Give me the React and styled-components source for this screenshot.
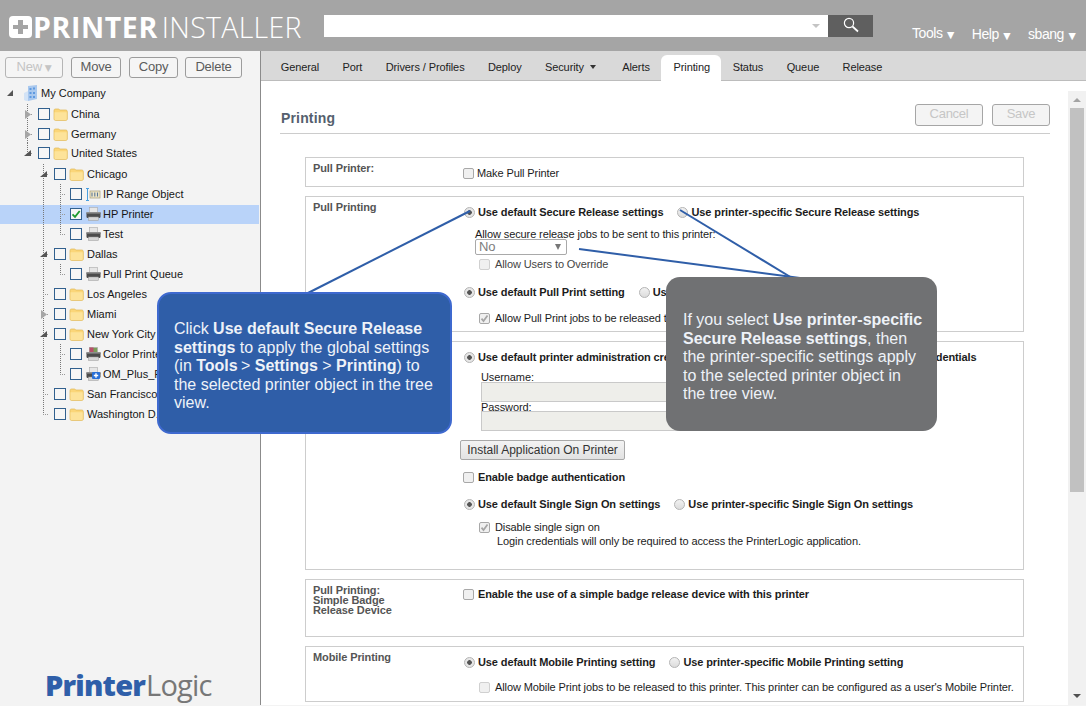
import React from "react";
import styled, { createGlobalStyle } from "styled-components";

const Global = createGlobalStyle`
  html, body { margin: 0; padding: 0; height: 100%; overflow: hidden; background: #f3f3f3; }
  body { font-family: "Liberation Sans", Arial, sans-serif; font-size: 11px; color: #1c1c1c; }
  * { box-sizing: border-box; }
`;

const Page = styled.div`position: relative; width: 1086px; height: 706px; display: flex; flex-direction: column; overflow: hidden; background: #f3f3f3;`;
const Header = styled.header`height: 51px; background: #a5a5a5; display: flex; flex: none;`;
const Brand = styled.div`width: 324px; padding: 16px 0 0 9px; display: flex; align-items: center; height: 37px; color: #fff; font-family: "Open Sans", sans-serif; font-size: 28.5px; line-height: 22px;`;
const BrandBold = styled.span`font-weight: 700; margin-left: 1px; letter-spacing: 0.6px;`;
const BrandLight = styled.span`font-weight: 300; margin-left: 4px; letter-spacing: 0.3px;`;
const SearchWrap = styled.div`width: 504px; height: 22px; margin-top: 15px; background: #fff; display: flex; align-items: center; justify-content: flex-end; padding-right: 8px;`;
const SearchCaret = styled.span`width: 0; height: 0; border: 4px solid transparent; border-top: 4px solid #c4c4c4; border-bottom: 0;`;
const SearchButton = styled.div`width: 45px; height: 22px; margin-top: 15px; background: #5f5f5f; display: flex; align-items: center; justify-content: center; padding-bottom: 2px;`;
const Nav = styled.nav`display: flex; margin-left: 39px; gap: 18px; padding-top: 25px; color: #fff; font-size: 14px; line-height: 16px; letter-spacing: -0.45px;`;
const NavItem = styled.span`margin-top: ${p => p.$dy || 0}px;`;
const Arrow = styled.span`font-family: "DejaVu Sans", sans-serif; font-size: 9.5px; margin-left: 1px;`;

const Body = styled.div`flex: 1; display: flex; min-height: 0; margin-bottom: 1px;`;
const Sidebar = styled.aside`width: 261px; flex: none; background: #f3f3f3; border-right: 1px solid #8b8b8b; display: flex; flex-direction: column;`;
const ToolBar = styled.div`display: flex; padding: 6px 0 0 5px; height: 32px;`;
const ToolButton = styled.div`
  height: 21px; width: ${p => p.$w}px; margin-right: ${p => p.$mr}px; border: 1px solid #9c9c9c; border-radius: 3px; background: #f5f5f5;
  font-size: 13px; letter-spacing: -0.25px; line-height: 17px; text-align: center; color: ${p => p.$off ? "#c4c4c4" : "#5b5b5b"};
  ${p => p.$off && "border-color:#b5b5b5;"}
`;
const SmallArrow = styled.span`font-family: "DejaVu Sans", sans-serif; font-size: 9px; margin-left: 3px;`;
const Tree = styled.div`display: flex; flex-direction: column;`;
const TreeRow = styled.div`
  height: 20px; display: flex; align-items: center; flex: none; margin-top: ${p => p.$mt || 0}px; font-size: 11px;
  ${p => p.$sel && "background: linear-gradient(transparent 1px, #b9d3f9 1px); width: 259px;"}
`;
const Gutter = styled.svg`flex: none; display: block;`;
const Check = styled.span`
  width: 12px; height: 12px; border: 1px solid #31608e; background: #f6f6f6; flex: none; margin-right: ${p => p.$mr}px; display: flex; align-items: center; justify-content: center;
`;
const TreeIcon = styled.svg`flex: none; display: block; margin-right: ${p => p.$mr ?? 3}px;`;
const TreeLabel = styled.span`white-space: nowrap; color: #161616;`;
const Logo = styled.div`margin-top: auto; padding: 0 0 0 45px; height: 35px; font-family: "Open Sans", sans-serif; font-size: 29px; line-height: 30px; letter-spacing: -0.8px; white-space: nowrap;`;
const LogoBold = styled.span`font-weight: 800; color: #2f5fa9;`;
const LogoLight = styled.span`font-weight: 400; color: #777; margin-left: 1px;`;

const Main = styled.main`flex: 1; display: flex; flex-direction: column; min-width: 0;`;
const Tabs = styled.div`height: 30px; flex: none; background: #d9d9d9; border-bottom: 1px solid #bcbcbc; display: flex; align-items: flex-end; padding-left: 8px; letter-spacing: -0.1px;`;
const Tab = styled.div`
  height: ${p => p.$on ? 26 : 25}px; line-height: 25px; padding: ${p => p.$on ? "0 11px 0 12px" : "0 11.7px"}; white-space: nowrap; color: #222; font-size: 11px;
  margin-bottom: ${p => p.$on ? -1 : 0}px; margin-right: ${p => p.$mr || 0}px;
  ${p => p.$on && "background:#fff; border-radius: 6px 6px 0 0;"}
`;
const TabCaret = styled.span`display: inline-block; width: 0; height: 0; border: 3.5px solid transparent; border-top: 4px solid #333; border-bottom: 0; margin-left: 6px; vertical-align: 2px;`;
const Work = styled.div`flex: 1; display: flex; min-height: 0; background: #fff;`;
const Content = styled.div`width: 807px; flex: none; padding: 23px 0 0 19px;`;
const TitleBar = styled.div`width: 770px; height: 30px; border-bottom: 1px solid #ccc; display: flex; align-items: flex-start; justify-content: space-between;`;
const Title = styled.h2`margin: 6px 0 0 1px; font-size: 14px; line-height: 16px; font-weight: 700; color: #555f6e; letter-spacing: 0.15px;`;
const TitleActions = styled.div`display: flex; gap: 9px;`;
const GhostButton = styled.div`height: 22px; width: ${p => p.$w}px; border: 1px solid #a6a6a6; border-radius: 3px; background: #f4f4f4; color: #c6c6c6; font-size: 13px; letter-spacing: -0.25px; line-height: 17px; text-align: center;`;
const Boxes = styled.div`display: flex; flex-direction: column; gap: 9px; margin: 23px 0 0 25px; width: 719px; letter-spacing: -0.1px;`;
const Box = styled.section`height: ${p => p.$h}px; border: 1px solid #cdcdcd; display: grid; grid-template-columns: 150px 1fr; padding-left: 7px; overflow: hidden;`;
const BoxLabel = styled.div`font-weight: 700; color: #555; font-size: 11px; line-height: ${p => p.$lh || 14}px; padding-top: ${p => p.$pt || 3}px; white-space: pre-line;`;
const BoxBody = styled.div`padding-top: ${p => p.$pt || 8}px; min-width: 0; display: flex; flex-direction: column; align-items: flex-start;`;
const Line = styled.div`
  height: 14px; line-height: 14px; display: flex; align-items: center; flex: none; white-space: nowrap;
  margin-top: ${p => p.$mt || 0}px; margin-left: ${p => p.$ml || 0}px; font-weight: ${p => p.$b ? 700 : 400};
`;
const DimText = styled.span`color: #444;`;
const Plain = styled.div`height: 14px; line-height: 14px; white-space: nowrap; flex: none; margin-top: ${p => p.$mt || 0}px; margin-left: ${p => p.$ml || 0}px;`;
const Radio = styled.span`
  width: 11px; height: 11px; border-radius: 50%; flex: none; border: 1px solid #b4b4b4; margin-left: ${p => p.$ml ?? 1}px; margin-right: ${p => p.$mr ?? 3}px;
  background: ${p => p.$on ? "radial-gradient(circle, #555 0 2px, #e6e6e6 2.6px)" : "linear-gradient(#f2f2f2,#dcdcdc)"};
`;
const Tick = styled.span`
  width: 11px; height: 11px; border-radius: 2px; flex: none; border: 1px solid ${p => p.$off ? "#d0d0d0" : "#a8a8a8"}; background: #f0f0f0;
  margin-right: ${p => p.$mr ?? 4}px; display: flex; align-items: center; justify-content: center;
`;
const SelectBox = styled.div`width: 92px; height: 16px; margin: -2px 0 0 12px; border: 1px solid #a9a9a9; border-radius: 2px; font-size: 13px; line-height: 14px; color: #7d7d7d; padding: 0 5px 0 3px; display: flex; justify-content: space-between; align-items: center;`;
const SelectCaret = styled.span`width: 0; height: 0; border: 3.5px solid transparent; border-top: 6px solid #777; border-bottom: 0;`;
const Field = styled.div`width: 290px; height: 20px; border: 1px solid #c9c9c9; background: #eeeeea; flex: none; margin: ${p => p.$mt}px 0 0 18px;`;
const InstallButton = styled.div`width: 165px; height: 20px; margin: 9px 0 0 -3px; flex: none; border: 1px solid #a8a8a8; border-radius: 2px; background: linear-gradient(#f3f3f3,#e2e2e2); font-size: 12px; letter-spacing: 0; line-height: 18px; text-align: center; color: #333;`;
const Scrollbar = styled.div`width: 18px; margin-top: 10px; background: #f1f1f1; flex: none; display: flex; flex-direction: column; align-items: center;`;
const ScrollUp = styled.span`width: 0; height: 0; margin-top: 7px; border: 4px solid transparent; border-bottom: 4px solid #a3a3a3; border-top: 0;`;
const Thumb = styled.div`width: 14px; height: 384px; margin-top: 6px; background: #c1c1c1;`;
const ScrollDown = styled.span`width: 0; height: 0; margin-top: auto; margin-bottom: 7px; border: 4px solid transparent; border-top: 4px solid #505050; border-bottom: 0;`;

const Lines = styled.svg`position: absolute; left: 0; top: 0; pointer-events: none;`;
const Callout = styled.div`
  position: absolute; left: ${p => p.$l}px; top: ${p => p.$t}px; width: ${p => p.$w}px; height: ${p => p.$h}px;
  border-radius: 14px; font-size: 16px; line-height: 18.5px; color: #eef2f8; padding: ${p => p.$pt}px ${p => p.$pr}px 0 ${p => p.$pl}px;
  background: ${p => p.$blue ? "#2f5ea8" : "#707173"}; ${p => p.$blue && "border: 2px solid #3e69cf;"}
`;

const Folder = () => (
  <TreeIcon width="15" height="13" viewBox="0 0 15 13">
    <path d="M1 2.5C1 1.5 1.6 1 2.4 1h3c.6 0 1 .3 1.3 1h6c1 0 1.6.6 1.6 1.6V11c0 .9-.6 1.4-1.4 1.4H2.4C1.6 12.4 1 11.9 1 11z" fill="#fbd679" stroke="#e0b758" strokeWidth=".7" />
    <path d="M1.5 4.2h12.2V11c0 .6-.4 1-1 1H2.5c-.6 0-1-.4-1-1z" fill="#fde39a" />
  </TreeIcon>
);
const PrinterIcon = ({ kind }) => (
  <TreeIcon $mr={2} width="15" height="14" viewBox="0 0 15 14">
    <rect x="3.5" y="0.5" width="8" height="5" fill={kind === "color" ? "#7a9e58" : "#e6e6e6"} stroke="#aaa" strokeWidth=".6" />
    {kind === "color" && <rect x="3.5" y="0.5" width="4" height="5" fill="#b84e6a" />}
    <rect x="0.5" y="5" width="14" height="6" rx="1.3" fill="#4c4c4c" />
    <rect x="0.5" y="5" width="14" height="1.6" fill="#8e8e8e" />
    <rect x="2.5" y="10" width="10" height="3.5" fill="#d6d6d6" stroke="#999" strokeWidth=".5" />
    {kind === "plus" && <><rect x="6" y="5" width="8" height="7" rx="1" fill="#2a71d8" /><path d="M10 6.3v4.4M7.8 8.5h4.4" stroke="#fff" strokeWidth="1.4" /></>}
  </TreeIcon>
);
const RangeIcon = () => (
  <TreeIcon $mr={2} width="15" height="13" viewBox="0 0 15 13">
    <path d="M1.5 0.5v12M0 .5h3M0 12.5h3" stroke="#4aa0e0" strokeWidth="1" fill="none" />
    <rect x="4" y="3" width="10" height="7" fill="#efe6c8" stroke="#a49a76" strokeWidth=".7" />
    <path d="M6 4.5v4M8.8 4.5v4M11.5 4.5v4" stroke="#5b7797" strokeWidth="1.1" />
  </TreeIcon>
);
const CompanyIcon = () => (
  <TreeIcon width="15" height="17" viewBox="0 0 15 17">
    <path d="M5 1l9-1v14l-9 2z" fill="#a9c8ee" />
    <path d="M1 8l4-2v10H3l-2-1z" fill="#d3e3f6" />
    <path d="M6.5 3h2v2h-2zM10 2.6h2v2h-2zM6.5 7h2v2h-2zM10 7h2v2h-2zM6.5 11h2v2h-2zM10 11h2v2h-2z" fill="#5f9ae0" />
  </TreeIcon>
);
const Green = () => (
  <svg width="10" height="10" viewBox="0 0 10 10"><path d="M1.5 5.3L4 7.8 8.7 2" fill="none" stroke="#1d9b2f" strokeWidth="1.8" /></svg>
);
const Grey = () => (
  <svg width="9" height="9" viewBox="0 0 9 9"><path d="M1.5 4.6L3.5 7 7.5 1.5" fill="none" stroke="#a5a5a5" strokeWidth="1.7" /></svg>
);

const AX = { 1: 27, 2: 43, 3: 60 };
const GW = { 0: 23, 1: 38, 2: 54, 3: 70 };
const Connector = ({ level, guides = [], last, exp }) => {
  const w = GW[level];
  const x = AX[level];
  return (
    <Gutter width={w} height="20" viewBox={`0 0 ${w} 20`}>
      {guides.map(g => <line key={g} x1={g + .5} x2={g + .5} y1="0" y2="20" stroke="#777" strokeDasharray="1 1" />)}
      {level > 0 && <line x1={x + .5} x2={x + .5} y1="0" y2={last ? 10 : 20} stroke="#777" strokeDasharray="1 1" />}
      {level > 0 && <line x1={x} x2={x + 6} y1="10.5" y2="10.5" stroke="#999" strokeDasharray="1 1" />}
      {exp === "open" && <path d={level === 0 ? "M7 13h6V7z" : `M${x - 3} 13h7V7z`} fill="#555" />}
      {exp === "closed" && <path d={`M${x - 2} 6l6 4.5-6 4.5z`} fill="#a5a5a5" />}
    </Gutter>
  );
};

const tree = [
  { level: 1, label: "China", exp: "closed", icon: "folder", mt: 1 },
  { level: 1, label: "Germany", exp: "closed", icon: "folder" },
  { level: 1, label: "United States", exp: "open", icon: "folder", last: true, mt: -1 },
  { level: 2, label: "Chicago", exp: "open", icon: "folder", mt: 1 },
  { level: 3, label: "IP Range Object", icon: "range", guides: [43] },
  { level: 3, label: "HP Printer", icon: "printer", sel: true, guides: [43] },
  { level: 3, label: "Test", icon: "printer", last: true, guides: [43] },
  { level: 2, label: "Dallas", exp: "open", icon: "folder" },
  { level: 3, label: "Pull Print Queue", icon: "printer", last: true, guides: [43] },
  { level: 2, label: "Los Angeles", icon: "folder" },
  { level: 2, label: "Miami", exp: "closed", icon: "folder" },
  { level: 2, label: "New York City", exp: "open", icon: "folder" },
  { level: 3, label: "Color Printer", icon: "color", guides: [43] },
  { level: 3, label: "OM_Plus_Printer", icon: "plus", last: true, guides: [43] },
  { level: 2, label: "San Francisco", icon: "folder" },
  { level: 2, label: "Washington D.C.", icon: "folder", last: true },
];
const iconFor = k => k === "folder" ? <Folder /> : k === "range" ? <RangeIcon /> : k === "printer" ? <PrinterIcon /> : k === "color" ? <PrinterIcon kind="color" /> : <PrinterIcon kind="plus" />;

export default function App() {
  return (
    <Page>
      <Global />
      <Header>
        <Brand>
          <svg width="23" height="22" viewBox="0 0 23 22"><path fillRule="evenodd" d="M4 0h15a4 4 0 0 1 4 4v14a4 4 0 0 1-4 4H4a4 4 0 0 1-4-4V4a4 4 0 0 1 4-4zM9 4v5H4v4h5v5h5v-5h5V9h-5V4z" fill="#fff" /></svg>
          <BrandBold>PRINTER</BrandBold><BrandLight>INSTALLER</BrandLight>
        </Brand>
        <SearchWrap><SearchCaret /></SearchWrap>
        <SearchButton>
          <svg width="16" height="16" viewBox="0 0 16 16" fill="none" stroke="#fff"><circle cx="6" cy="6" r="4.6" strokeWidth="1.2" /><path d="M9.5 9.5L15 14.5" strokeWidth="1.7" /></svg>
        </SearchButton>
        <Nav>
          <NavItem>Tools <Arrow>▼</Arrow></NavItem>
          <NavItem $dy={1}>Help <Arrow>▼</Arrow></NavItem>
          <NavItem $dy={1}>sbang <Arrow>▼</Arrow></NavItem>
        </Nav>
      </Header>
      <Body>
        <Sidebar>
          <ToolBar>
            <ToolButton $w={58} $mr={8} $off>New<SmallArrow>▼</SmallArrow></ToolButton>
            <ToolButton $w={50} $mr={8}>Move</ToolButton>
            <ToolButton $w={49} $mr={7}>Copy</ToolButton>
            <ToolButton $w={57} $mr={0}>Delete</ToolButton>
          </ToolBar>
          <Tree>
            <TreeRow>
              <Connector level={0} exp="open" />
              <CompanyIcon />
              <TreeLabel>My Company</TreeLabel>
            </TreeRow>
            {tree.map(n => (
              <TreeRow key={n.label} $sel={n.sel} $mt={n.mt}>
                <Connector level={n.level} guides={n.guides || []} last={n.last} exp={n.exp} />
                <Check $mr={n.level === 3 ? 4 : 3}>{n.sel && <Green />}</Check>
                {iconFor(n.icon)}
                <TreeLabel>{n.label}</TreeLabel>
              </TreeRow>
            ))}
          </Tree>
          <Logo><LogoBold>Printer</LogoBold><LogoLight>Logic</LogoLight></Logo>
        </Sidebar>
        <Main>
          <Tabs>
            <Tab>General</Tab><Tab>Port</Tab><Tab>Drivers / Profiles</Tab><Tab>Deploy</Tab>
            <Tab $mr={3}>Security<TabCaret /></Tab><Tab>Alerts</Tab><Tab $on>Printing</Tab><Tab>Status</Tab><Tab>Queue</Tab><Tab>Release</Tab>
          </Tabs>
          <Work>
            <Content>
              <TitleBar>
                <Title>Printing</Title>
                <TitleActions><GhostButton $w={68}>Cancel</GhostButton><GhostButton $w={58}>Save</GhostButton></TitleActions>
              </TitleBar>
              <Boxes>
                <Box $h={30}>
                  <BoxLabel>Pull Printer:</BoxLabel>
                  <BoxBody><Line><Tick $mr={3} />Make Pull Printer</Line></BoxBody>
                </Box>
                <Box $h={136}>
                  <BoxLabel>Pull Printing</BoxLabel>
                  <BoxBody>
                    <Line $b><Radio $on />Use default Secure Release settings<Radio $ml={14} />Use printer-specific Secure Release settings</Line>
                    <Plain $mt={8} $ml={12}>Allow secure release jobs to be sent to this printer:</Plain>
                    <SelectBox>No<SelectCaret /></SelectBox>
                    <Line $mt={2} $ml={16}><Tick $off $mr={5} /><DimText>Allow Users to Override</DimText></Line>
                    <Line $mt={14} $b><Radio $on />Use default Pull Print setting<Radio $ml={14} />Use printer-specific Pull Print setting</Line>
                    <Line $mt={12} $ml={16}><Tick $mr={5}><Grey /></Tick>Allow Pull Print jobs to be released to this printer.</Line>
                  </BoxBody>
                </Box>
                <Box $h={229}>
                  <BoxLabel />
                  <BoxBody>
                    <Line $b><Radio $on />Use default printer administration credentials<Radio $ml={14} />Use printer-specific administration credentials</Line>
                    <Plain $mt={6} $ml={18}>Username:</Plain>
                    <Field $mt={-2} />
                    <Plain $mt={-2} $ml={18}>Password:</Plain>
                    <Field $mt={-3} />
                    <InstallButton>Install Application On Printer</InstallButton>
                    <Line $mt={10} $b><Tick />Enable badge authentication</Line>
                    <Line $mt={13} $b><Radio $on />Use default Single Sign On settings<Radio $ml={14} />Use printer-specific Single Sign On settings</Line>
                    <Line $mt={9} $ml={16}><Tick $mr={5}><Grey /></Tick>Disable single sign on</Line>
                    <Plain $ml={34}>Login credentials will only be required to access the PrinterLogic application.</Plain>
                  </BoxBody>
                </Box>
                <Box $h={58}>
                  <BoxLabel $lh={10} $pt={5}>{"Pull Printing:\nSimple Badge\nRelease Device"}</BoxLabel>
                  <BoxBody $pt={7}><Line $b><Tick />Enable the use of a simple badge release device with this printer</Line></BoxBody>
                </Box>
                <Box $h={56}>
                  <BoxLabel>Mobile Printing</BoxLabel>
                  <BoxBody>
                    <Line $b><Radio $on />Use default Mobile Printing setting<Radio $ml={14} />Use printer-specific Mobile Printing setting</Line>
                    <Line $mt={11} $ml={16}><Tick $off $mr={5} />Allow Mobile Print jobs to be released to this printer. This printer can be configured as a user's Mobile Printer.</Line>
                  </BoxBody>
                </Box>
              </Boxes>
            </Content>
            <Scrollbar><ScrollUp /><Thumb /><ScrollDown /></Scrollbar>
          </Work>
        </Main>
      </Body>
      <Lines width="1086" height="706" viewBox="0 0 1086 706">
        <g stroke="#2f5ea8" strokeWidth="2" fill="none">
          <path d="M308 293L470 211" />
          <path d="M680 210L792 278" />
          <path d="M579 249L800 278" />
        </g>
      </Lines>
      <Callout $blue $l={157} $t={292} $w={295} $h={142} $pt={26} $pl={15} $pr={13}>
        Click <b>Use default Secure Release settings</b> to apply the global settings (in <b>Tools</b>&thinsp;&gt; <b>Settings</b> &gt; <b>Printing</b>) to the selected printer object in the tree view.
      </Callout>
      <Callout $l={666} $t={277} $w={271} $h={154} $pt={34} $pl={17} $pr={13}>
        If you select <b>Use printer-specific Secure Release settings</b>, then the printer-specific settings apply to the selected printer object in the tree view.
      </Callout>
    </Page>
  );
}
